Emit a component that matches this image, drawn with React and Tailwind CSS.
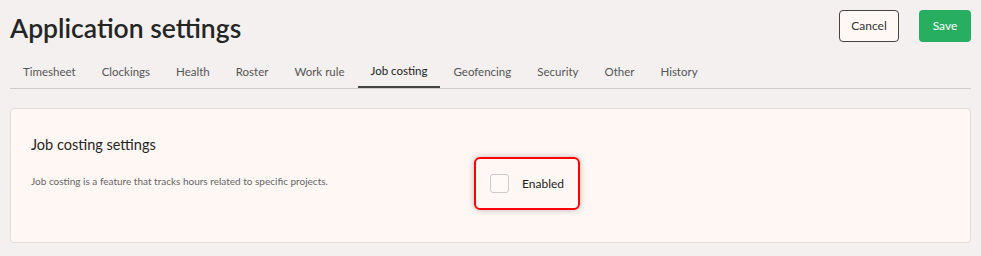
function App() {
  const tabs = [
    "Timesheet",
    "Clockings",
    "Health",
    "Roster",
    "Work rule",
    "Job costing",
    "Geofencing",
    "Security",
    "Other",
    "History",
  ];
  const active = "Job costing";

  return (
    <div
      className="w-[981px] h-[256px] bg-[#f3f0ef] px-[10px] text-[#222]"
      style={{ fontFamily: 'Lato, "Open Sans", sans-serif' }}
    >
      <div className="flex items-start justify-between pt-[10px]">
        <h1 className="text-[26.5px] leading-[36px] font-semibold text-[#252525]">
          Application settings
        </h1>
        <div className="flex gap-[20px]">
          <button className="h-[32px] w-[60px] rounded-[4px] border border-[#444] bg-[#fff8f5] text-[12px] text-[#333]">
            Cancel
          </button>
          <button className="h-[32px] w-[52px] rounded-[4px] bg-[#27ae60] text-[12px] text-white">
            Save
          </button>
        </div>
      </div>

      <div className="mt-[10px] flex border-b border-[#cfcccc]">
        {tabs.map((t) => (
          <div
            key={t}
            className={
              t === active
                ? "px-[13px] h-[32px] flex items-center text-[11.5px] text-[#222] border-b-2 border-[#444] -mb-px"
                : "px-[13px] h-[32px] flex items-center text-[11.5px] text-[#555]"
            }
          >
            {t}
          </div>
        ))}
      </div>

      <div className="mt-[19px] h-[135px] rounded-[4px] border border-[#e1dcda] bg-[#fef7f4] flex items-start px-[20px] pt-[26px]">
        <div className="w-[443px]">
          <p className="text-[14.5px] leading-[20px] text-[#252525]">Job costing settings</p>
          <p className="mt-[19px] text-[10px] text-[#666]">
            Job costing is a feature that tracks hours related to specific projects.
          </p>
        </div>
        <div className="mt-[22px] w-[106px] h-[53px] rounded-[6px] border-2 border-[#ff0000] shadow-[0_0_6px_rgba(0,0,0,0.25)] flex items-center pl-[14px]">
          <span className="w-[19px] h-[19px] rounded-[3px] border border-[#ccc] bg-[#fffaf8]"></span>
          <span className="ml-[13px] text-[12px] text-[#222]">Enabled</span>
        </div>
      </div>
    </div>
  );
}

export default App;
